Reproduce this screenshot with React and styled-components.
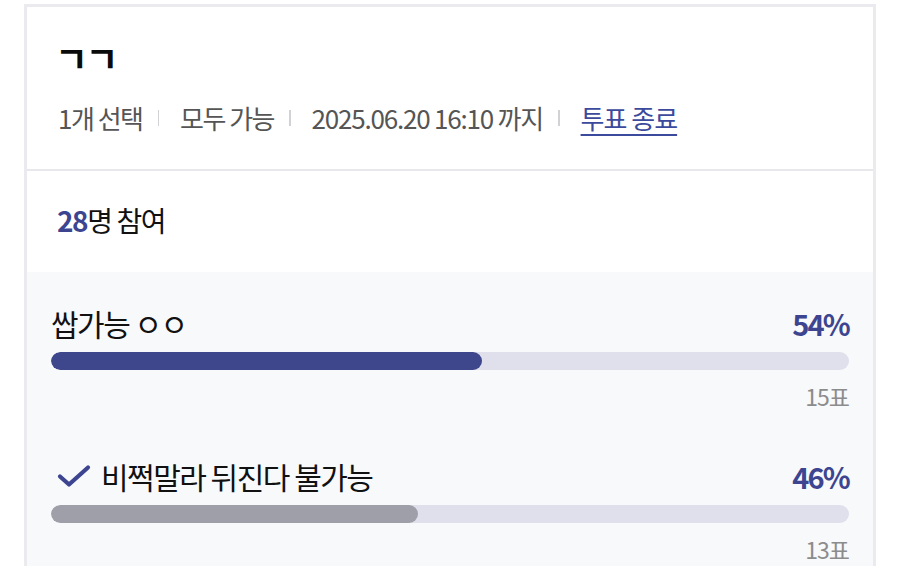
import React from "react";
import styled, { createGlobalStyle } from "styled-components";

const Global = createGlobalStyle`
  html, body { margin: 0; padding: 0; background: #ffffff; }
  body { font-family: "Noto Sans CJK KR", "Noto Sans", sans-serif; color: #111; }
`;

const Page = styled.div`
  padding: 4px 24px 0 24px;
  height: 562px;
  overflow: hidden;
`;

const Card = styled.div`
  border: 3px solid #eaeaef;
  border-bottom: none;
  background: #fff;
  min-height: 600px;
`;

const Header = styled.div`
  padding: 30px 31px 33px 31px;
  border-bottom: 2px solid #e8e8ec;
`;

const Title = styled.h1`
  margin: 0 0 0 -3px;
  font-size: 36px;
  font-weight: 700;
  line-height: 40px;
  letter-spacing: -2.5px;
  color: #0a0a0a;
`;

const Meta = styled.div`
  margin-top: 23px;
  display: flex;
  align-items: center;
  font-size: 26px;
  line-height: 36px;
  color: #555;
  letter-spacing: -1.2px;
`;

const MetaItem = styled.span`
  white-space: pre;
  letter-spacing: ${(p) => (p.$tight ? "-1.5px" : "inherit")};
`;

const Sep = styled.span`
  width: 1.5px;
  height: 16px;
  background: #d2d2d6;
  margin: 0 21px 0 15px;
`;

const EndLink = styled.a`
  color: #3b4a9c;
  text-decoration: underline;
  text-underline-offset: 5px;
  text-decoration-thickness: 1.5px;
  letter-spacing: -1px;
  cursor: pointer;
`;

const Participants = styled.div`
  padding: 31px 30px 33px 30px;
  font-size: 28px;
  line-height: 37px;
  letter-spacing: -1.4px;
  color: #111;
`;

const Count = styled.b`
  color: #3d4590;
  font-weight: 700;
`;

const Options = styled.div`
  background: #f8f9fb;
  padding: 34px 24px 40px 24px;
  display: flex;
  flex-direction: column;
  gap: 48px;
`;

const Option = styled.div`
  display: flex;
  flex-direction: column;
`;

const OptionHead = styled.div`
  display: flex;
  align-items: center;
  justify-content: space-between;
  height: 36px;
`;

const Label = styled.div`
  display: flex;
  align-items: center;
  gap: 10px;
  font-size: 30px;
  line-height: 36px;
  padding-bottom: 3px;
  letter-spacing: -1.5px;
  color: #111;
  white-space: pre;
  padding-left: ${(p) => (p.$checked ? "6px" : "0")};
`;

const Percent = styled.div`
  font-size: 29px;
  line-height: 36px;
  padding-bottom: 3px;
  font-weight: 700;
  letter-spacing: -1.8px;
  color: #3d4590;
`;

const Track = styled.div`
  margin-top: 10px;
  height: 18px;
  border-radius: 9px;
  background: #dfe0ec;
  overflow: hidden;
`;

const Fill = styled.div`
  height: 100%;
  border-radius: 9px;
  background: ${(p) => (p.$top ? "#3f478c" : "#9e9fa9")};
`;

const Votes = styled.div`
  margin-top: 11px;
  text-align: right;
  font-size: 23px;
  line-height: 30px;
  letter-spacing: -1px;
  color: #8c8c8c;
`;

const Check = () => (
  <svg width="34" height="24" viewBox="0 0 34 24" fill="none">
    <path d="M3 12.5 L12 20.5 L31 3.5" stroke="#3d4590" strokeWidth="4.2" strokeLinecap="round" strokeLinejoin="round" />
  </svg>
);

const options = [
  { label: "쌉가능 ㅇㅇ", pct: 54, votes: 15, top: true, checked: false },
  { label: "비쩍말라 뒤진다 불가능", pct: 46, votes: 13, top: false, checked: true },
];

export default function App() {
  return (
    <>
      <Global />
      <Page>
        <Card>
          <Header>
            <Title>ㄱㄱ</Title>
            <Meta>
              <MetaItem $tight>1개 선택</MetaItem>
              <Sep />
              <MetaItem $tight>모두 가능</MetaItem>
              <Sep />
              <MetaItem>2025.06.20 16:10 까지</MetaItem>
              <Sep />
              <EndLink>투표 종료</EndLink>
            </Meta>
          </Header>
          <Participants>
            <Count>28</Count>명 참여
          </Participants>
          <Options>
            {options.map((o) => (
              <Option key={o.label}>
                <OptionHead>
                  <Label $checked={o.checked}>
                    {o.checked && <Check />}
                    {o.label}
                  </Label>
                  <Percent>{o.pct}%</Percent>
                </OptionHead>
                <Track>
                  <Fill $top={o.top} style={{ width: `${o.pct}%` }} />
                </Track>
                <Votes>{o.votes}표</Votes>
              </Option>
            ))}
          </Options>
        </Card>
      </Page>
    </>
  );
}
